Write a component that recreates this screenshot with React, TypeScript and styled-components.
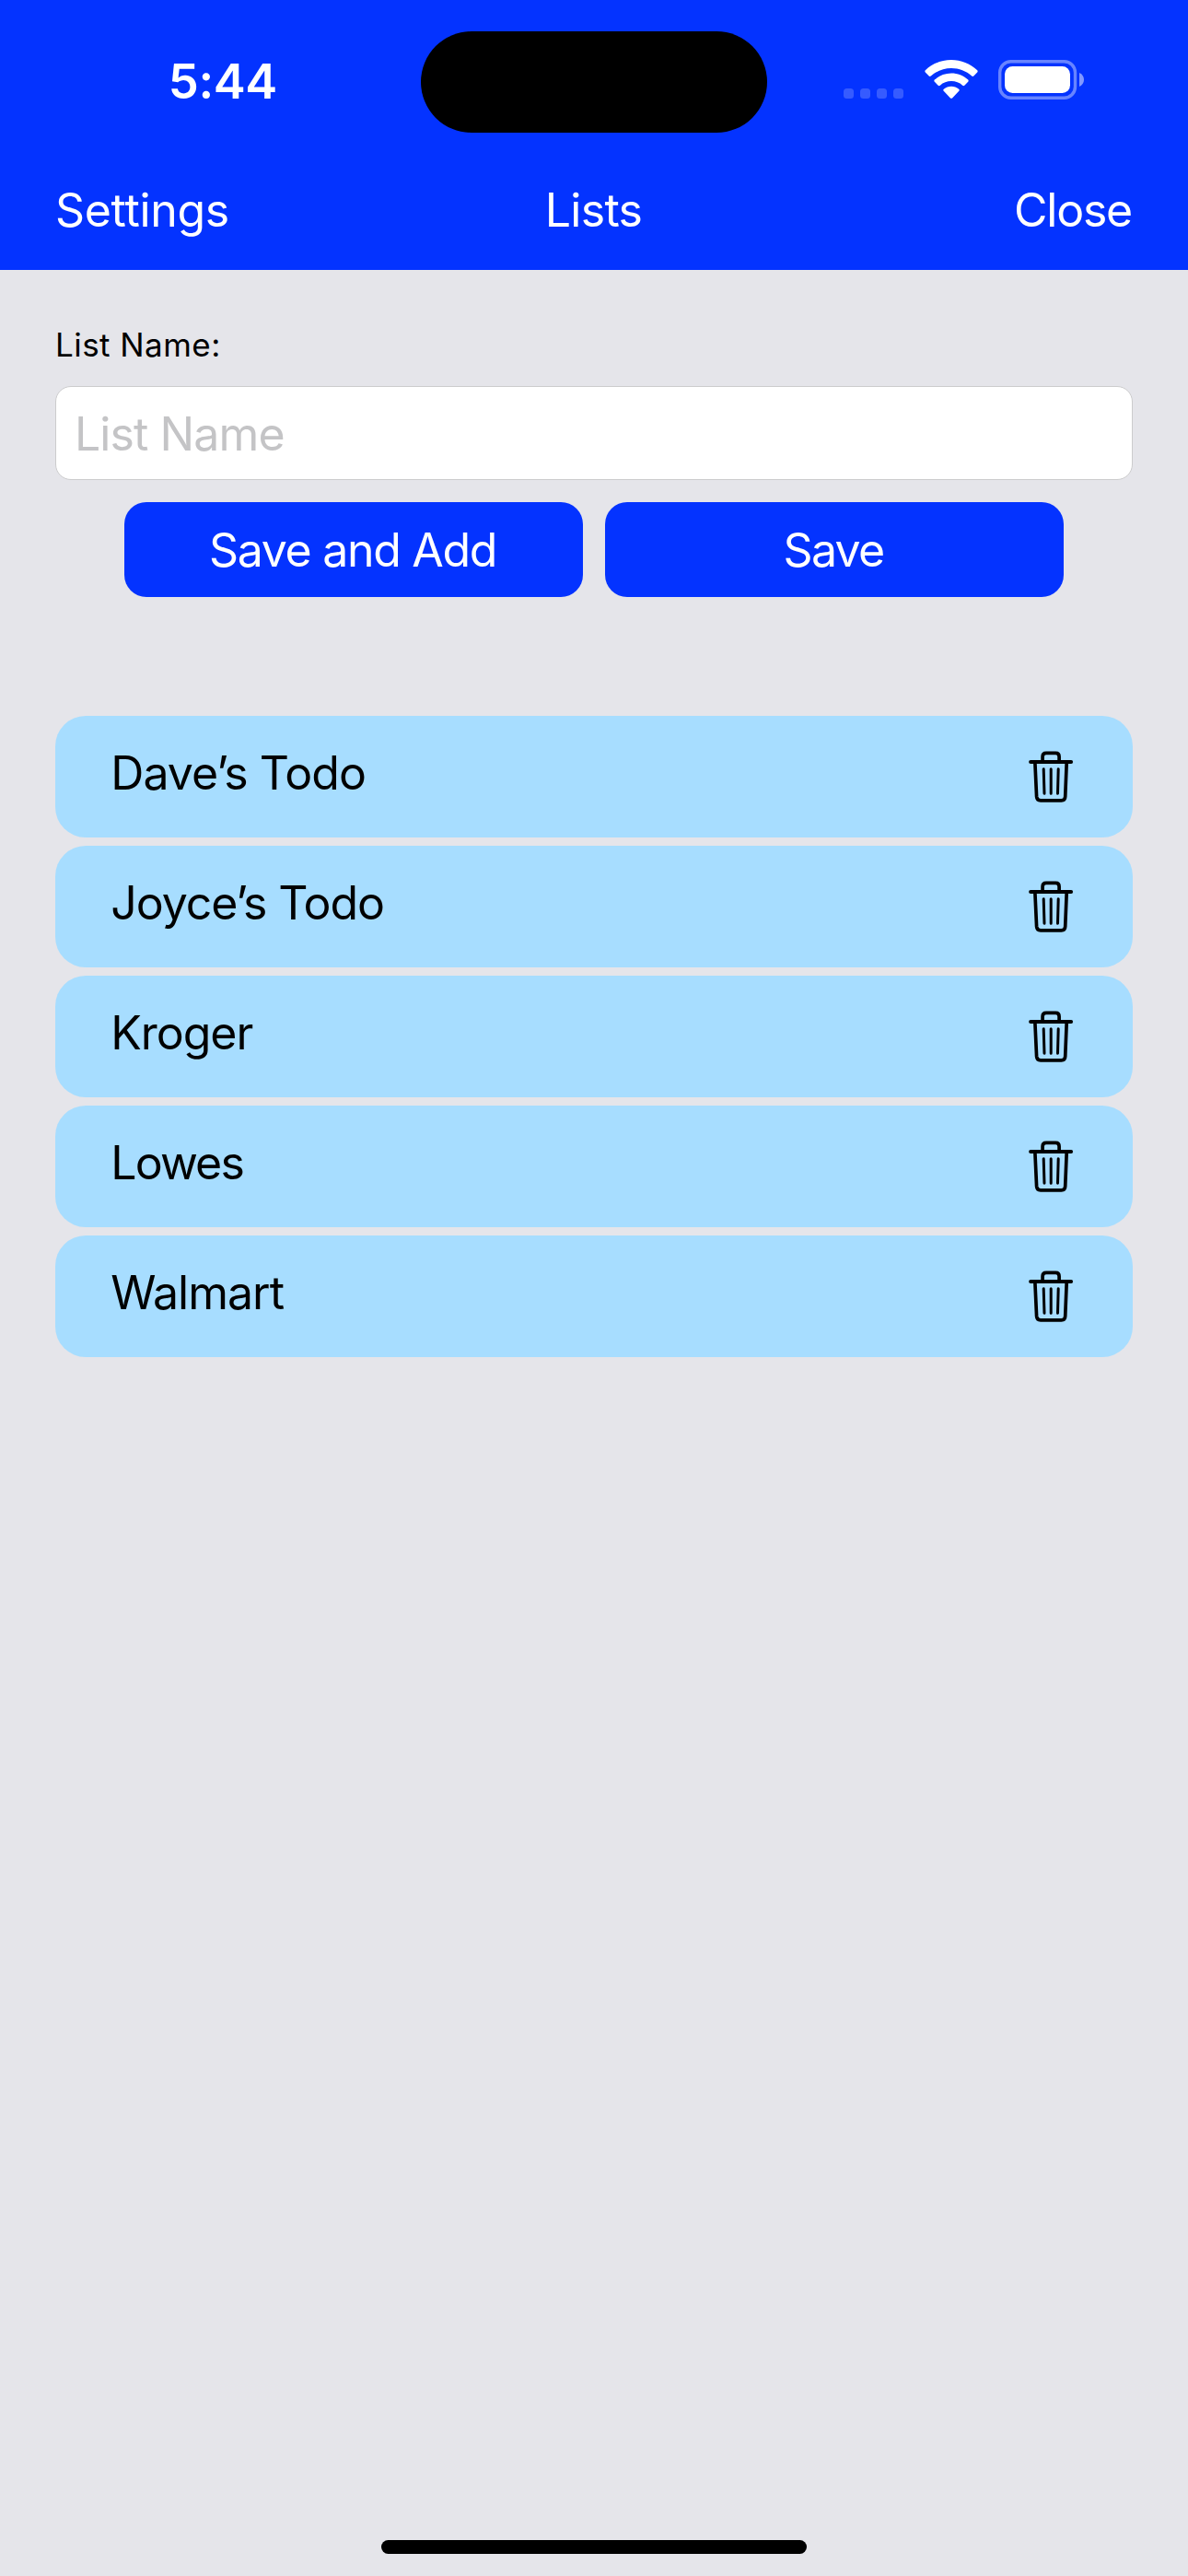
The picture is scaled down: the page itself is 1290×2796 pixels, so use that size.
import React from "react";
import styled, { createGlobalStyle } from "styled-components";

const BLUE = "#0433ff";
const GRAY = "#e5e5ea";

const GlobalStyle = createGlobalStyle`
  * { box-sizing: border-box; }
  body {
    margin: 0;
    background: ${GRAY};
    font-family: Inter, Roboto, "Liberation Sans", sans-serif;
    font-kerning: normal;
  }
`;

const Screen = styled.div`
  display: flex;
  flex-direction: column;
  width: 1290px;
  height: 2796px;
  background: ${GRAY};
  color: #000;
`;

const Header = styled.header`
  height: 293.4px;
  background: ${BLUE};
  color: #fff;
`;

const StatusBar = styled.div`
  display: grid;
  grid-template-columns: 457px 376px 457px;
  height: 177px;
`;

const Clock = styled.div`
  padding: 58px 0 0 182.8px;
  font-size: 52.5px;
  line-height: 60px;
  font-weight: 600;
  letter-spacing: -0.4px;
`;

const Island = styled.div`
  height: 110.5px;
  margin-top: 33.5px;
  border-radius: 56px;
  background: #000;
`;

const StatusIcons = styled.div`
  display: flex;
  align-items: flex-end;
  height: 108px;
  padding-left: 83px;
`;

const Dots = styled.div`
  display: flex;
  gap: 7px;
  margin-bottom: 1px;
`;

const Dot = styled.i`
  width: 11px;
  height: 11px;
  border-radius: 3.5px;
  background: rgba(255, 255, 255, 0.2);
`;

const WifiSvg = styled.svg`
  display: block;
  width: 58px;
  height: 43px;
  margin-left: 22.5px;
`;

const BatterySvg = styled.svg`
  display: block;
  width: 94px;
  height: 43px;
  margin-left: 22.5px;
`;

const NavBar = styled.nav`
  display: grid;
  grid-template-columns: 1fr 1fr 1fr;
  padding: 0 61px 0 60px;
  height: 102px;
  align-items: center;
`;

const NavItem = styled.a<{ $align: string; $spacing: number }>`
  font-size: 50px;
  line-height: 60px;
  text-align: ${(p) => p.$align};
  letter-spacing: ${(p) => p.$spacing}px;
`;

const Form = styled.section`
  display: flex;
  flex-direction: column;
  padding: 59.6px 60px 0;
`;

const Label = styled.label`
  font-size: 35px;
  line-height: 42px;
  letter-spacing: 0.45px;
`;

const Field = styled.input`
  height: 102px;
  margin-top: 24px;
  padding: 2px 20px 0;
  border: 1px solid #cccccd;
  border-radius: 17px;
  outline: none;
  background: #fff;
  font-family: inherit;
  font-size: 50px;
  letter-spacing: -0.92px;
  &::placeholder {
    color: #c4c4c6;
    opacity: 1;
  }
`;

const Actions = styled.div`
  display: grid;
  grid-template-columns: 498px 498px;
  justify-content: center;
  gap: 24px;
  margin-top: 24px;
`;

const Button = styled.button<{ $spacing: number }>`
  height: 103px;
  padding: 1px 2px 0 0;
  border: 0;
  border-radius: 24px;
  background: ${BLUE};
  color: #fff;
  font-family: inherit;
  font-size: 50px;
  line-height: 60px;
  letter-spacing: ${(p) => p.$spacing}px;
`;

const Lists = styled.ul`
  display: flex;
  flex-direction: column;
  gap: 9px;
  margin: 129px 60px 0;
  padding: 0;
  list-style: none;
`;

const Row = styled.li`
  display: flex;
  align-items: center;
  justify-content: space-between;
  height: 132px;
  padding: 0 64px 0 60.3px;
  border-radius: 33px;
  background: #a7ddff;
`;

const RowTitle = styled.span<{ $spacing: number }>`
  padding-bottom: 8px;
  font-size: 50px;
  line-height: 60px;
  letter-spacing: ${(p) => p.$spacing}px;
`;

const TrashSvg = styled.svg`
  display: block;
  width: 50px;
  height: 58px;
`;

const HomeArea = styled.footer`
  display: flex;
  justify-content: center;
  margin-top: auto;
  padding-bottom: 24px;
`;

const HomeIndicator = styled.div`
  width: 462px;
  height: 15px;
  border-radius: 8px;
  background: #000;
`;

const Wifi = () => (
  <WifiSvg viewBox="0 0 58 43" fill="#fff">
    <path d="M29 0C39.600 0 49.500 4.100 57.200 11.300C57.800 11.900 57.800 12.900 57.200 13.500L53.300 17.500C52.700 18.100 51.900 18.100 51.200 17.500C45.200 12 37.300 9 29 9C20.700 9 12.800 12 6.800 17.500C6.100 18.100 5.300 18.100 4.700 17.500L0.800 13.500C0.200 12.900 0.200 11.900 0.800 11.300C8.500 4.100 18.400 0 29 0Z" />
    <path d="M29 14.600C35.800 14.600 42.200 17.200 47.200 21.600C47.800 22.200 47.800 23.100 47.200 23.700L43.300 27.700C42.700 28.300 41.900 28.300 41.200 27.700C37.800 24.700 33.600 23.100 29 23.100C24.400 23.100 20.200 24.700 16.800 27.700C16.100 28.300 15.300 28.300 14.700 27.700L10.800 23.700C10.200 23.100 10.200 22.200 10.800 21.600C15.800 17.200 22.200 14.600 29 14.600Z" />
    <path d="M29 28.800C32 28.800 34.900 29.900 37.200 31.800C37.900 32.400 37.900 33.200 37.300 33.800L30 41.400C29.400 42 28.600 42 28 41.400L20.700 33.800C20.100 33.200 20.100 32.400 20.800 31.800C23.100 29.900 26 28.800 29 28.800Z" />
  </WifiSvg>
);

const Battery = () => (
  <BatterySvg viewBox="0 0 94 43">
    <rect x="1.700" y="1.700" width="81.800" height="39.600" rx="12" fill="none" stroke="#fff" strokeOpacity="0.4" strokeWidth="3.400" />
    <rect x="7" y="7" width="71" height="29" rx="8.500" fill="#fff" />
    <path d="M88 14C91 15.300 93 18.200 93 21.500C93 24.800 91 27.700 88 29Z" fill="#fff" fillOpacity="0.5" />
  </BatterySvg>
);

const Trash = () => (
  <TrashSvg viewBox="0 0 50 58" fill="none" stroke="#000" strokeLinecap="round" strokeLinejoin="round">
    <path d="M3.100 13H47.100" strokeWidth="4" />
    <path d="M16.100 12V7.200C16.100 4.700 17.600 3.400 20 3.400H30.300C32.700 3.400 34.100 4.700 34.100 7.200V12" strokeWidth="3.700" />
    <path d="M7.900 14L9.600 50.700C9.800 53.400 11.400 54.900 13.900 54.900H36.500C39 54.900 40.600 53.400 40.700 50.700L42.200 14" strokeWidth="3.700" />
    <path d="M17.200 20.800L18 47.300M25.200 20.800V47.300M33.200 20.800L32.500 47.300" strokeWidth="3" />
  </TrashSvg>
);

const lists = [
  { name: "Dave’s Todo", spacing: -0.94 },
  { name: "Joyce’s Todo", spacing: -1.1 },
  { name: "Kroger", spacing: -1.05 },
  { name: "Lowes", spacing: -1.85 },
  { name: "Walmart", spacing: -1 },
];

export default function App() {
  return (
    <Screen>
      <GlobalStyle />
      <Header>
        <StatusBar>
          <Clock>5:44</Clock>
          <Island />
          <StatusIcons>
            <Dots>
              <Dot />
              <Dot />
              <Dot />
              <Dot />
            </Dots>
            <Wifi />
            <Battery />
          </StatusIcons>
        </StatusBar>
        <NavBar>
          <NavItem $align="left" $spacing={-0.33}>Settings</NavItem>
          <NavItem $align="center" $spacing={-0.71}>Lists</NavItem>
          <NavItem $align="right" $spacing={-1.25}>Close</NavItem>
        </NavBar>
      </Header>
      <Form>
        <Label htmlFor="list-name">List Name:</Label>
        <Field id="list-name" placeholder="List Name" />
        <Actions>
          <Button $spacing={-1.3}>Save and Add</Button>
          <Button $spacing={-1.7}>Save</Button>
        </Actions>
      </Form>
      <Lists>
        {lists.map((l) => (
          <Row key={l.name}>
            <RowTitle $spacing={l.spacing}>{l.name}</RowTitle>
            <Trash />
          </Row>
        ))}
      </Lists>
      <HomeArea>
        <HomeIndicator />
      </HomeArea>
    </Screen>
  );
}
